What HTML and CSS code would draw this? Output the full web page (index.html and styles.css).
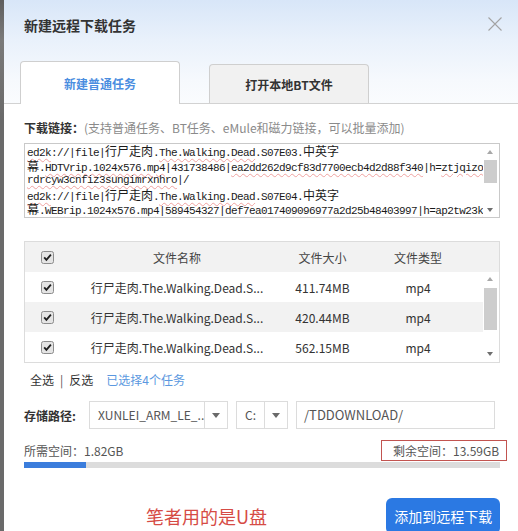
FILE: index.html
```html
<!DOCTYPE html>
<html lang="zh-CN">
<head>
<meta charset="utf-8">
<title>新建远程下载任务</title>
<link rel="stylesheet" href="styles.css">
</head>
<body>
<div class="page">
  <div class="strip"></div>
  <div class="dialog">
    <div class="header">
      <div class="title">新建远程下载任务</div>
      <svg class="close" width="14" height="14" viewBox="0 0 14 14"><path d="M0.5 0.5 L13.5 13.5 M13.5 0.5 L0.5 13.5" stroke="#a3a3a3" stroke-width="1.1" fill="none"/></svg>
    </div>
    <div class="tabs">
      <div class="tab active">新建普通任务</div>
      <div class="tab">打开本地BT文件</div>
    </div>
    <div class="body">
      <div class="link-label"><b>下载链接：</b><span class="hint">(支持普通任务、BT任务、eMule和磁力链接，可以批量添加)</span></div>
      <div class="links">
        <div class="links-text">
          <div class="ln"><span class="sp">ed2k</span>://|file|<span class="c">行尸走肉</span>.<span class="sp">The.Walking.Dead</span>.S07E03.<span class="c">中英字</span></div>
          <div class="ln"><span class="c">幕</span>.<span class="sp">HDTVrip.1024x576.mp4</span>|431738486|<span class="sp">ea2dd262d9cf83d7700ecb4d2d88f340</span>|h=<span class="sp">ztjqizo</span></div>
          <div class="ln"><span class="sp">rdrcyw3cnfiz3sungimrxnhro</span>|/</div>
          <div class="ln"><span class="sp">ed2k</span>://|file|<span class="c">行尸走肉</span>.<span class="sp">The.Walking.Dead</span>.S07E04.<span class="c">中英字</span></div>
          <div class="ln"><span class="c">幕</span>.<span class="sp">WEBrip.1024x576.mp4</span>|589454327|<span class="sp">def7ea017409096977a2d25b48403997</span>|h=<span class="sp">ap2tw23k</span></div>
          <div class="ln"><span class="sp">eiqyetfdwbpoagwpib557fdz</span>|/</div>
        </div>
        <div class="vscroll">
          <div class="arrow"><i class="tri-up"></i></div>
          <div class="track"><div class="thumb t1"></div></div>
          <div class="arrow"><i class="tri-down"></i></div>
        </div>
      </div>

      <div class="table">
        <div class="thead">
          <div class="cell"><svg class="cb" width="13" height="13" viewBox="0 0 13 13"><rect x="0.5" y="0.5" width="12" height="12" rx="2" fill="#e4e4e4" stroke="#8c8c8c"/><path d="M3.2 6.4 L5.4 8.9 L9.9 3.6" fill="none" stroke="#1e1e1e" stroke-width="1.8"/></svg></div>
          <div class="cell">文件名称</div>
          <div class="cell">文件大小</div>
          <div class="cell">文件类型</div>
          <div></div>
        </div>
        <div class="tbody">
          <div class="rows">
            <div class="row">
              <div class="cell"><svg class="cb" width="13" height="13" viewBox="0 0 13 13"><rect x="0.5" y="0.5" width="12" height="12" rx="2" fill="#e4e4e4" stroke="#8c8c8c"/><path d="M3.2 6.4 L5.4 8.9 L9.9 3.6" fill="none" stroke="#1e1e1e" stroke-width="1.8"/></svg></div>
              <div class="cell">行尸走肉.The.Walking.Dead.S...</div>
              <div class="cell">411.74MB</div>
              <div class="cell">mp4</div>
            </div>
            <div class="row alt">
              <div class="cell"><svg class="cb" width="13" height="13" viewBox="0 0 13 13"><rect x="0.5" y="0.5" width="12" height="12" rx="2" fill="#e4e4e4" stroke="#8c8c8c"/><path d="M3.2 6.4 L5.4 8.9 L9.9 3.6" fill="none" stroke="#1e1e1e" stroke-width="1.8"/></svg></div>
              <div class="cell">行尸走肉.The.Walking.Dead.S...</div>
              <div class="cell">420.44MB</div>
              <div class="cell">mp4</div>
            </div>
            <div class="row">
              <div class="cell"><svg class="cb" width="13" height="13" viewBox="0 0 13 13"><rect x="0.5" y="0.5" width="12" height="12" rx="2" fill="#e4e4e4" stroke="#8c8c8c"/><path d="M3.2 6.4 L5.4 8.9 L9.9 3.6" fill="none" stroke="#1e1e1e" stroke-width="1.8"/></svg></div>
              <div class="cell">行尸走肉.The.Walking.Dead.S...</div>
              <div class="cell">562.15MB</div>
              <div class="cell">mp4</div>
            </div>
          </div>
          <div class="vscroll tscroll">
            <div class="arrow"><i class="tri-up"></i></div>
            <div class="track"><div class="thumb t2"></div></div>
            <div class="arrow"><i class="tri-down"></i></div>
          </div>
        </div>
      </div>

      <div class="sel-row">
        <span>全选</span><span class="sep">|</span><span>反选</span><span class="count">已选择4个任务</span>
      </div>

      <div class="path-row">
        <div class="path-label">存储路径:</div>
        <div class="select s1"><div class="val">XUNLEI_ARM_LE_...</div><div class="arr"><i class="tri-dd"></i></div></div>
        <div class="select s2"><div class="val">C:</div><div class="arr"><i class="tri-dd"></i></div></div>
        <div class="input">/TDDOWNLOAD/</div>
      </div>

      <div class="space-row">
        <div class="need">所需空间：1.82GB</div>
        <div class="free">剩余空间：13.59GB</div>
      </div>
      <div class="progress"><div class="fill"></div></div>

      <div class="bottom">
        <div class="note">笔者用的是U盘</div>
        <div class="btn">添加到远程下载</div>
      </div>
    </div>
  </div>
</div>
</body>
</html>
```

FILE: styles.css
```css
* { box-sizing: border-box; }
html, body { margin: 0; padding: 0; }
body {
  font-family: "Noto Sans CJK SC", "Noto Sans", sans-serif;
  font-size: 12px;
  color: #333;
  background: #fff;
}
.page {
  display: flex;
  width: 518px;
  height: 531px;
  overflow: hidden;
}
.strip {
  width: 4px;
  flex: none;
  background: linear-gradient(to bottom, #5f5f5f 0, #7a7a7a 40px, #6a6a6a 120px, #6a6a6a 100%);
}
.dialog {
  flex: 1;
  background: linear-gradient(to bottom, #d8e6f8 0, #e9f1fb 40px, #f6f9fd 80px, #fafcfe 104px, #fff 104px);
}
.header {
  height: 61px;
  display: flex;
  justify-content: space-between;
  align-items: flex-start;
  padding: 0 16px 0 20px;
}
.title {
  margin-top: 15px;
  line-height: 20px;
  font-size: 14px;
  font-weight: bold;
  color: #333;
}
.close { margin-top: 17px; }

.tabs {
  display: flex;
  align-items: flex-end;
  gap: 29px;
  height: 43px;
  padding-left: 16px;
  border-bottom: 1px solid #d2d2d2;
}
.tab {
  width: 160px;
  height: 39px;
  border: 1px solid #cfcfcf;
  border-bottom: none;
  border-radius: 4px 4px 0 0;
  background: #f1f1f1;
  display: flex;
  align-items: center;
  justify-content: center;
  font-size: 12px;
  font-weight: bold;
  color: #333;
}
.tab.active {
  height: 43px;
  margin-bottom: -1px;
  background: #fff;
  color: #4a8de0;
}

.body {
  background: #fff;
  padding: 0 18px 0 20px;
}
.link-label {
  margin-top: 16px;
  line-height: 16px;
  font-size: 12px;
  white-space: nowrap;
}
.link-label b { color: #333; }
.hint { color: #8a8a8a; }

.links {
  margin-top: 7px;
  height: 75px;
  border: 1px solid #c9c9c9;
  display: flex;
  overflow: hidden;
}
.links-text {
  flex: 1;
  padding-left: 2px;
  overflow: hidden;
  font-family: "Liberation Mono", monospace;
  font-size: 11px;
  letter-spacing: -0.6px;
  color: #1a1a1a;
}
.ln {
  height: 14.6px;
  line-height: 14.6px;
  white-space: pre;
}
.c {
  font-family: "Noto Sans CJK SC", sans-serif;
  font-size: 12px;
  line-height: 14px;
  letter-spacing: 0;
}
.sp {
  text-decoration: underline wavy #efa2a0;
  text-decoration-thickness: 1px;
  text-underline-offset: 2px;
}

.vscroll {
  width: 14px;
  margin-right: 2px;
  display: flex;
  flex-direction: column;
  flex: none;
}
.arrow {
  height: 15px;
  display: flex;
  align-items: center;
  justify-content: center;
}
.track { flex: 1; }
.thumb {
  width: 13px;
  margin: 0 auto;
  background: #cdcdcd;
}
.thumb.t1 { margin-top: 1px; height: 23px; }
.thumb.t2 { margin-top: 2px; height: 42px; }
.tri-up, .tri-down, .tri-dd {
  display: block;
  width: 0;
  height: 0;
  border-left: 3.5px solid transparent;
  border-right: 3.5px solid transparent;
}
.tri-up { border-bottom: 4px solid #a8a8a8; }
.tri-down { border-top: 4px solid #6e6e6e; }

.table {
  margin-top: 23px;
  border: 1px solid #dcdcdc;
}
.thead, .row {
  display: grid;
  grid-template-columns: 44px 216px 75px 116px 1fr;
  align-items: center;
  height: 30px;
}
.thead { background: #f2f2f2; color: #444; }
.cell {
  text-align: center;
  white-space: nowrap;
  display: flex;
  justify-content: center;
  align-items: center;
}
.cb { display: block; }
.tbody { display: flex; }
.rows { width: 458px; }
.row.alt { background: #f2f2f2; }
.tscroll .arrow { height: 14px; }
.tscroll .arrow:last-child { height: 17px; }

.sel-row {
  margin-top: 9px;
  line-height: 16px;
  padding-left: 6px;
  color: #333;
}
.sep { margin: 0 6px; color: #555; }
.count { margin-left: 13px; color: #5b98e0; }

.path-row {
  margin-top: 13px;
  display: flex;
  align-items: center;
  height: 28px;
}
.path-label {
  width: 65px;
  font-weight: bold;
  color: #333;
}
.select {
  height: 28px;
  border: 1px solid #dcdcdc;
  display: flex;
  margin-right: 8px;
}
.select.s1 { width: 139px; }
.select.s2 { width: 52px; }
.select .val {
  flex: 1;
  padding-left: 8px;
  line-height: 26px;
  font-size: 12px;
  color: #555;
  white-space: nowrap;
  overflow: hidden;
}
.select .arr {
  width: 23px;
  border-left: 1px solid #dcdcdc;
  display: flex;
  align-items: center;
  justify-content: center;
}
.tri-dd {
  border-left-width: 4px;
  border-right-width: 4px;
  border-top: 5px solid #6a6a6a;
}
.input {
  width: 199px;
  height: 28px;
  border: 1px solid #dcdcdc;
  padding-left: 7px;
  line-height: 26px;
  font-size: 13px;
  color: #555;
}

.space-row {
  margin-top: 11px;
  display: flex;
  justify-content: space-between;
  align-items: center;
  height: 21px;
  color: #555;
}
.free {
  height: 21px;
  line-height: 19px;
  border: 1px solid #c25450;
  padding: 0 7px 0 11px;
  margin-right: -7px;
}
.progress {
  margin-top: 1px;
  height: 6px;
  background: #dcdcdc;
}
.fill {
  width: 62px;
  height: 6px;
  background: #3b7ddc;
}

.bottom {
  margin-top: 30px;
  display: flex;
  align-items: center;
}
.note {
  margin-left: 122px;
  font-size: 18px;
  color: #d64b45;
}
.btn {
  margin-left: auto;
  width: 114px;
  height: 36px;
  line-height: 36px;
  text-align: center;
  border-radius: 6px;
  background: #2b79e3;
  color: #fff;
  font-size: 14px;
}
```
